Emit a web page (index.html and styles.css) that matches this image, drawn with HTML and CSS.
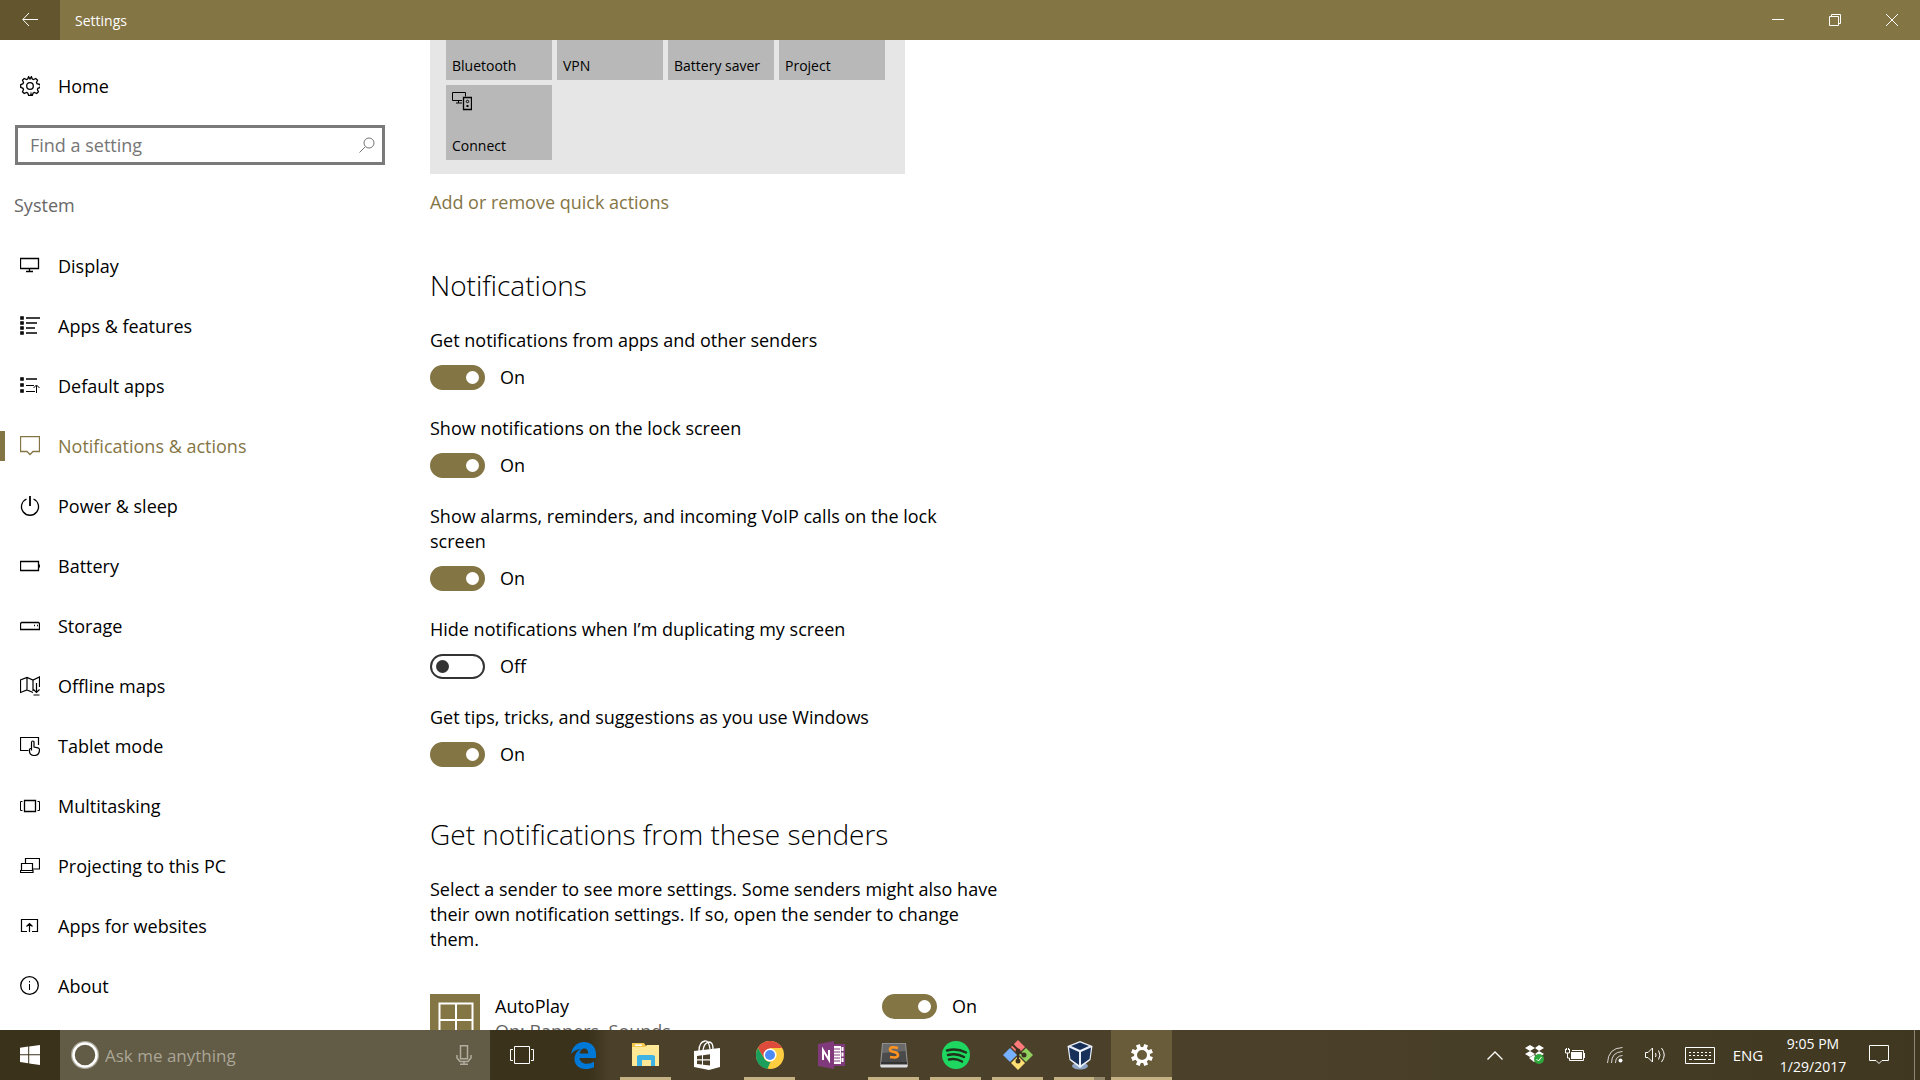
FILE: index.html
```html
<!DOCTYPE html>
<html lang="en">
<head>
<meta charset="utf-8">
<meta name="viewport" content="width=device-width, initial-scale=1">
<title>Settings</title>
<link rel="stylesheet" href="styles.css">
</head>
<body>
<header class="titlebar">
  <button class="back" aria-label="Back"><svg width="16" height="14" viewBox="0 0 16 14"><path d="M7 0 .8 6.500 7 13M1 6.500h15"/></svg></button>
  <h1 class="title">Settings</h1>
  <div class="window-buttons">
    <button aria-label="Minimize"><svg width="12" height="12" viewBox="0 0 12 12"><path d="M0 5.500h12"/></svg></button>
    <button aria-label="Restore"><svg width="12" height="12" viewBox="0 0 12 12"><path d="M.5 2.500h9v9h-9zM2.500 2.500v-2h9v9h-2"/></svg></button>
    <button aria-label="Close"><svg width="12" height="12" viewBox="0 0 12 12"><path d="M0 0l12 12M12 0 0 12"/></svg></button>
  </div>
</header>

<div class="window">
  <aside class="sidebar">
    <a class="nav-item home" href="#home"><svg class="icon" viewBox="0 0 20 20"><path stroke-width="1.300" d="M8.600.7 7.700 3 6.500 3.500 4.200 2.500 2.500 4.200l1 2.300L3 7.700.7 8.600v2.800L3 12.300l.5 1.200-1 2.300 1.700 1.700 2.300-1 1.200.5.9 2.300h2l.4-1.500.4 1.500h.9l.9-2.300 1.200-.5 2.300 1 1.700-1.700-1-2.300.5-1.200 2.300-.9V8.600L17 7.700l-.5-1.200 1-2.300-1.700-1.700-2.300 1L12.300 3 11.400.7 10 3z"/><circle cx="10" cy="10" r="3.300" stroke-width="1.300"/></svg>Home</a>
    <form class="search">
      <input type="text" aria-label="Find a setting" placeholder="Find a setting">
      <svg width="16" height="16" viewBox="0 0 16 16"><circle cx="10" cy="6" r="5"/><path d="M6.500 9.500.5 15.500"/></svg>
    </form>
    <h2 class="group">System</h2>
    <nav class="nav">
      <a class="nav-item" href="#display"><svg class="icon" viewBox="0 0 20 20"><path d="M.5 2.500h18v10H.5zM9.500 13v2.500M6 15.500h7" stroke-width="1.300"/></svg>Display</a>
      <a class="nav-item" href="#apps"><svg class="icon" viewBox="0 0 20 20"><path d="M1 1h2v2H1zM1 6h2v2H1zM1 11h2v2H1zM1 16h2v2H1z" stroke-width="1.600"/><path d="M6 2h14M6 7h11M6 12h9M6 17h11" stroke-width="1.500"/></svg>Apps &amp; features</a>
      <a class="nav-item" href="#default"><svg class="icon" viewBox="0 0 20 20"><path d="M1 2h2v2H1zM1 8h2v2H1zM1 14h2v2H1z" stroke-width="1.600"/><path d="M6 3h11" stroke-width="1.500"/><path d="M6 9.500h8M6 15.500h9M16.500 17V9.500M13.500 12l3-3 3 3"/></svg>Default apps</a>
      <a class="nav-item active" href="#notifications" aria-current="page"><svg class="icon" viewBox="0 0 20 20"><path d="M.5.500h19v15H13l-3 3-3-3H.5z" stroke-width="1.300"/></svg>Notifications &amp; actions</a>
      <a class="nav-item" href="#power"><svg class="icon" viewBox="0 0 20 20"><path d="M10 0v10" stroke-width="1.800"/><path d="M6.500 3a8.500 8.500 0 1 0 7 0" stroke-width="1.300"/></svg>Power &amp; sleep</a>
      <a class="nav-item" href="#battery"><svg class="icon" viewBox="0 0 20 20"><path d="M.5 5.500h18v9H.5zM19.500 8.500v3" stroke-width="1.300"/></svg>Battery</a>
      <a class="nav-item" href="#storage"><svg class="icon" viewBox="0 0 20 20"><path d="M1.500 6.500h17l1 1v6H.5v-6zM14 9.500h1M17 9.500h1" stroke-width="1.300"/></svg>Storage</a>
      <a class="nav-item" href="#maps"><svg class="icon" viewBox="0 0 20 20"><path d="M13 16.500l-6-2.500-6.500 2.500V4L7 1.500 13 4l6.500-3V11M7 1.500V14M13 4v11M16.500 7v9M13.500 13.500l3 3 3-3M13.500 19h6" stroke-width="1.200"/></svg>Offline maps</a>
      <a class="nav-item" href="#tablet"><svg class="icon" viewBox="0 0 20 20"><path d="M8.500 14.500h-8v-13h18V9M11.500 14.500V6.500q0-1.500 1.300-1.500T14 6.500V11l4 .8q1.500.4 1.500 2-.2 5.700-5 5.700T9.500 15.500v-2q0-1 1-1h1" stroke-width="1.200"/></svg>Tablet mode</a>
      <a class="nav-item" href="#multitasking"><svg class="icon" viewBox="0 0 20 20"><path d="M4.500 4.500h11v11h-11z" stroke-width="1.300"/><path d="M2.500 5.500h-2v9h2M17.500 5.500h2v9h-2"/></svg>Multitasking</a>
      <a class="nav-item" href="#projecting"><svg class="icon" viewBox="0 0 20 20"><path d="M5.500 7V2.500h14v10.500H13M1.500 14V7.500h11V14M.5 14.500h12.500v2H.5z" stroke-width="1.200"/></svg>Projecting to this PC</a>
      <a class="nav-item" href="#websites"><svg class="icon" viewBox="0 0 20 20"><path d="M7 15.500H1.500v-12h16v12H12M9.500 16V8M6.500 10.500l3-3 3 3" stroke-width="1.200"/></svg>Apps for websites</a>
      <a class="nav-item" href="#about"><svg class="icon" viewBox="0 0 20 20"><circle cx="9.500" cy="9.500" r="8.800" stroke-width="1.300"/><path d="M9.500 8v6M9.500 5v1.500"/></svg>About</a>
    </nav>
  </aside>

  <main class="content">
    <div class="quick-actions">
      <button class="tile">Bluetooth</button>
      <button class="tile">VPN</button>
      <button class="tile">Battery saver</button>
      <button class="tile">Project</button>
      <button class="tile"><svg class="icon" viewBox="0 0 20 20"><path d="M10 8.500H.5v-8h13v4M6.500 9v2M4 11h6"/><path d="M11.500 5.500h8v12h-8z" stroke-width="1.300"/><circle cx="15.500" cy="9.500" r="1.200"/><path d="M14.500 14h2" stroke-width="2"/></svg>Connect</button>
    </div>
    <a class="link" href="#quick">Add or remove quick actions</a>

    <section class="section">
      <h2 class="heading">Notifications</h2>
      <div class="setting"><label for="t1">Get notifications from apps and other senders</label><div class="switch"><input type="checkbox" role="switch" id="t1" checked><span>On</span></div></div>
      <div class="setting"><label for="t2">Show notifications on the lock screen</label><div class="switch"><input type="checkbox" role="switch" id="t2" checked><span>On</span></div></div>
      <div class="setting"><label for="t3">Show alarms, reminders, and incoming VoIP calls on the lock screen</label><div class="switch"><input type="checkbox" role="switch" id="t3" checked><span>On</span></div></div>
      <div class="setting"><label for="t4">Hide notifications when I’m duplicating my screen</label><div class="switch"><input type="checkbox" role="switch" id="t4"><span>Off</span></div></div>
      <div class="setting"><label for="t5">Get tips, tricks, and suggestions as you use Windows</label><div class="switch"><input type="checkbox" role="switch" id="t5" checked><span>On</span></div></div>
    </section>

    <section class="section">
      <h2 class="heading">Get notifications from these senders</h2>
      <p class="description">Select a sender to see more settings. Some senders might also have their own notification settings. If so, open the sender to change them.</p>
      <div class="sender">
        <svg class="sender-icon" viewBox="0 0 50 50"><path d="M9.500 9.500h33v33h-33zM26 9.500v33M9.500 26h33"/></svg>
        <div class="sender-text"><label for="t6">AutoPlay</label><span class="muted">On: Banners, Sounds</span></div>
        <div class="switch"><input type="checkbox" role="switch" id="t6" checked><span>On</span></div>
      </div>
    </section>
  </main>
</div>

<footer class="taskbar">
  <button class="start" aria-label="Start"><svg width="20" height="20" viewBox="0 0 20 20" fill="#fff"><path d="M0 2.800 8.200 1.600v7.600H0zM9.200 1.500 20 0v9.200H9.200zM0 10.200h8.200v8L0 17zM9.200 10.200H20V20L9.200 18.400z"/></svg></button>
  <form class="cortana">
    <svg width="28" height="28" viewBox="0 0 28 28" fill="none"><circle cx="14" cy="14" r="12.500" stroke="#aaa697" stroke-width="3"/><circle cx="14" cy="14" r="11.500" stroke="#fff" stroke-width="2.500"/></svg>
    <input type="text" aria-label="Ask me anything" placeholder="Ask me anything">
    <svg width="16" height="20" viewBox="0 0 16 20" fill="none" stroke="#b1ad9f" stroke-width="1.500"><path d="M4.500.8h7v13h-7zM1 10v3l3 3.500h8l3-3.500v-3M8 16.500v3M4 19.200h8"/></svg>
  </form>
  <div class="apps">
    <button class="app" aria-label="Task view"><svg width="24" height="18" viewBox="0 0 24 18" fill="none" stroke="#fff"><path d="M4.500.5h15v17h-15zM3 3.500H.5v11H3M21 3.500h2.500v11H21"/></svg></button>
    <button class="app" aria-label="Edge"><svg width="25" height="27" viewBox="0 0 25 27"><path fill="#0078d7" d="M0 12C1.500 4 7 0 13 0c7.500 0 12 5.500 12 12v4H8.500c.3 4 4 5.800 7.500 5.800 2.500 0 5-.7 7-2v5.400c-2.500 1.200-5 1.800-8.500 1.800C7.500 27 3.500 22.500 3.500 17 3.500 12.500 6 9 10 7 5.500 7.200 2.500 9 0 12zM8.700 11.500h8.500C17.200 8.500 16 6.500 13.300 6.500 10.700 6.500 9 9 8.700 11.500z"/></svg></button>
    <button class="app open" aria-label="File Explorer"><svg width="28" height="24" viewBox="0 0 28 24"><path fill="#f5c84b" d="M0 0h12l2 3h13v5H0z"/><path fill="#ffe896" d="M0 4h13l2-2h12v21H0z"/><path fill="#3fb4e4" d="M5 23V13l2-1h14l2 1v10h-4v-6h-9v6z"/><path fill="#fff" d="M3 1.500h7v1.500H3z"/></svg></button>
    <button class="app" aria-label="Store"><svg width="27" height="30" viewBox="0 0 27 30"><path fill="#fff" d="M0 11l26-3v19L15 30 0 27z"/><path d="M5 11Q5 2 11 1q4-.5 5 8M9 10q1-7 6-8 4 0 4 7" fill="none" stroke="#fff" stroke-width="1.300"/><path fill="#4b412a" d="M3 16l5-.7v4H3zM9 15.200l7-1v5H9zM3 20.500h5v4l-5-.6zM9 20.500h7v5l-7-.8z"/></svg></button>
    <button class="app open" aria-label="Chrome"><svg width="28" height="28" viewBox="0 0 28 28"><circle cx="14" cy="14" r="14" fill="#ffcd40"/><path fill="#de4a3c" d="M2 7C7-2.300 21-2.300 26 7H14L8 17z"/><path fill="#1a9f5c" d="M2 7l6.500 11q2 3 6 3l-3 6.700C2 26.500-3 16 2 7z"/><circle cx="14" cy="14" r="6.500" fill="#fff"/><circle cx="14" cy="14" r="5" fill="#4c8bf5"/></svg></button>
    <button class="app" aria-label="OneNote"><svg width="28" height="28" viewBox="0 0 28 28"><path fill="#80397b" d="M15 3h12v22H15z"/><path fill="#fff" d="M14 5h9v18h-9zM23.500 6h2v4h-2zM23.500 11.500h2v4h-2zM23.500 17h2v4h-2z"/><path d="M15 8h7M15 11h7M15 14h7M15 17h7M15 20h7" stroke="#80397b"/><path fill="#80397b" d="M0 3 16 0v28L0 25z"/><path d="M5 19V9l6 10V9" fill="none" stroke="#fff" stroke-width="2"/></svg></button>
    <button class="app open" aria-label="Sublime Text"><svg width="28" height="25" viewBox="0 0 28 25"><path fill="#8f8f8f" d="M2 0h24l2 22-1 3H1l-1-3z"/><path fill="#6a6a6a" d="M3 1h22l1.500 18h-25z"/><path fill="#4a4a4a" d="M2.500 10l23-2 1 11h-25z"/><path fill="#333" d="M1 19h26v2H1z"/><path fill="#ddd" d="M0 22h28l-1 2H1z"/><path d="M18 5q-8-2-8 1.500 0 2 4 2.500 4 .7 4 3 0 3.500-8 2" fill="none" stroke="#ff9320" stroke-width="2.600"/></svg></button>
    <button class="app open" aria-label="Spotify"><svg width="28" height="28" viewBox="0 0 28 28"><circle cx="14" cy="14" r="14" fill="#1ed760"/><path d="M5 9.500q10-2.500 19 2M6 14q9-2 16 2M7 18.500q7-1.500 13 2" fill="none" stroke="#20301a" stroke-width="2.500" stroke-linecap="round"/></svg></button>
    <button class="app open" aria-label="Git"><svg width="30" height="30" viewBox="0 0 30 30"><path fill="#ff7a78" d="M15 0l7 7-7 7-7-7z"/><path fill="#77b0ff" d="M7 8l7 7-7 7-7-7z"/><path fill="#8fd15c" d="M23 8l7 7-7 7-7-7z"/><path fill="#ffe074" d="M15 16l7 7-7 7-7-7z"/><path d="M9 4l6 6v13M15 11l6 4" fill="none" stroke="#3d3122" stroke-width="2"/><g fill="#3d3122"><circle cx="15" cy="11" r="2.500"/><circle cx="21" cy="15" r="2.500"/><circle cx="15" cy="21" r="2.500"/></g></svg></button>
    <button class="app open multi" aria-label="VirtualBox"><svg width="26" height="29" viewBox="0 0 26 29"><ellipse cx="13" cy="25" rx="8" ry="3.500" fill="#8ea3c4"/><path fill="#e9eff8" d="M13 0l12.500 5-2 14L13 27 2.500 19 .5 5z"/><path fill="#17305a" d="M13 1.500l9 3.500-9 4-9-4zM2 6.500l10 4.500v13l-8.500-6zM24 6.500 14 11v13l8.500-6z"/></svg></button>
    <button class="app open current" aria-label="Settings"><svg width="22" height="22" viewBox="0 0 22 22" fill="none" stroke="#fff"><circle cx="11" cy="11" r="6.500" stroke-width="3"/><path d="M11 0v4M11 18v4M0 11h4M18 11h4" stroke-width="4" transform="rotate(22.500 11 11)"/><path d="M11 0v4M11 18v4M0 11h4M18 11h4" stroke-width="4" transform="rotate(67.500 11 11)"/></svg></button>
  </div>
  <div class="tray">
    <button aria-label="Show hidden icons"><svg width="16" height="9" viewBox="0 0 16 9"><path d="M.5 8.500 8 1l7.500 7.500" stroke-width="1.300"/></svg></button>
    <button aria-label="Dropbox"><svg width="20" height="20" viewBox="0 0 20 20"><path fill="#fff" stroke="none" d="M5 0l5 3-5 3-5-3zM14 0l5 3-5 3-4-3zM5 6l5 3-5 3-5-3zM14 6l5 3-5 3-4-3zM4 13l5-3 5 3-5 4z"/><circle cx="14" cy="14" r="5" fill="#2fa83e" stroke="none"/><path d="M11.500 14l2 2 3-4"/></svg></button>
    <button aria-label="Battery"><svg width="20" height="14" viewBox="0 0 20 14"><path d="M7 2.500h11.500v10h-14V10M.5 1v4h4V1M1.500 0v2M3.500 0v2M2.500 5v5h2M19.500 5v5"/><path fill="#fff" stroke="none" d="M6 4h11v7H6z"/></svg></button>
    <button aria-label="Network"><svg width="16" height="16" viewBox="0 0 16 16"><path d="M.5 16Q1 1 15.500.5M4.500 16Q4.500 5 15.500 4.500M8.500 16q0-7 7-7.500" opacity=".8"/><circle cx="13.500" cy="13.500" r="2" fill="#fff" stroke="none"/></svg></button>
    <button aria-label="Volume"><svg width="21" height="16" viewBox="0 0 21 16"><path d="M.5 5.500H3L7.500 1v14L3 10.500H.5zM10.500 6q1 2 0 4M13.500 3.500q3 4.500 0 9M16.500 1q5.500 7 0 14"/></svg></button>
    <button class="keyboard" aria-label="Touch keyboard"><svg width="30" height="17" viewBox="0 0 30 17"><path d="M.5.500h29v16H.5z"/><path d="M4 5.500h22M4 8.500h22" stroke-dasharray="2 2"/><path d="M4 12.500h3M9 12.500h12M23 12.500h3"/></svg></button>
    <button class="language">ENG</button>
    <button class="clock"><span>9:05 PM</span><span>1/29/2017</span></button>
    <button class="action-center" aria-label="Action center"><svg width="20" height="20" viewBox="0 0 20 20"><path d="M.5.500h19v15H13l-3 3-3-3H.5z"/></svg></button>
    <button class="show-desktop" aria-label="Show desktop"></button>
  </div>
</footer>
</body>
</html>
```
FILE: styles.css
```css
:root {
  --accent: #847545;
}

* { box-sizing: border-box; }

body {
  margin: 0;
  height: 100vh;
  display: grid;
  grid-template-rows: 40px minmax(0, 1fr) 50px;
  overflow: hidden;
  background: #fff;
  color: #000;
  font: 18px/25px "Open Sans", "Noto Sans", sans-serif;
}

button, input { font: inherit; color: inherit; }
button { border: 0; padding: 0; background: none; }
a { color: inherit; text-decoration: none; }
h1, h2, p { margin: 0; font-weight: 400; }
svg { display: block; flex: none; }

/* Title bar */
.titlebar {
  display: flex;
  align-items: center;
  background: var(--accent);
  color: #fff;
}
.titlebar svg { fill: none; stroke: #fff; }
.back {
  display: grid;
  place-items: center;
  width: 60px;
  height: 100%;
  background: #63552d;
}
.title { margin-left: 15px; font-size: 14px; }
.window-buttons { display: flex; height: 100%; margin-left: auto; }
.window-buttons button { display: grid; place-items: center; width: 57px; }

/* Window */
.window {
  display: grid;
  grid-template-columns: 430px minmax(0, 1fr);
  overflow: hidden;
}
.icon { width: 20px; height: 20px; fill: none; stroke: currentColor; }

.sidebar { padding-top: 16px; }
.nav-item {
  display: flex;
  align-items: center;
  gap: 18px;
  height: 60px;
  padding-left: 20px;
}
.active { position: relative; color: var(--accent); }
.active::before {
  content: "";
  position: absolute;
  left: 0;
  width: 5px;
  height: 30px;
  background: var(--accent);
}
.search {
  display: flex;
  align-items: center;
  height: 40px;
  margin: 9px 45px 0 15px;
  padding: 0 7px 0 12px;
  border: 3px solid #7a7a7a;
}
.search svg { fill: none; stroke: #767676; }
.search input, .cortana input {
  flex: 1;
  min-width: 0;
  padding: 0;
  border: 0;
  outline: 0;
  background: none;
}
.search input::placeholder { color: #767676; opacity: 1; }
.group { margin: 28px 0 18px 14px; font-size: 18px; color: #666; }

/* Content, scrolled part-way down */
.content { max-width: 572px; }
.quick-actions {
  display: grid;
  grid-template-columns: repeat(4, 106px);
  grid-auto-rows: 75px;
  gap: 5px;
  width: 475px;
  margin-top: -51px;
  padding: 16px 16px 14px;
  background: #e6e6e6;
}
.tile {
  display: flex;
  flex-direction: column;
  align-items: flex-start;
  justify-content: flex-end;
  padding: 7px 6px 4px;
  background: #b8b8b8;
  font-size: 14px;
  line-height: 20px;
}
.tile svg { margin-bottom: auto; }
.link { display: inline-block; margin-top: 16px; color: var(--accent); }
.section { padding-top: 50px; }
.heading { margin-bottom: 23px; font-weight: 300; font-size: 28px; line-height: 40px; }
.setting { margin-bottom: 26px; }
.setting label { display: block; max-width: 550px; margin-bottom: 12px; }
.section + .section { padding-top: 21px; }

.switch { display: flex; gap: 15px; }
.switch input {
  appearance: none;
  display: flex;
  align-items: center;
  width: 55px;
  height: 25px;
  margin: 0;
  padding: 0 4px;
  border: 2px solid #333;
  border-radius: 13px;
}
.switch input::before {
  content: "";
  width: 13px;
  height: 13px;
  border-radius: 50%;
  background: #333;
}
.switch input:checked {
  justify-content: flex-end;
  border-color: var(--accent);
  background: var(--accent);
}
.switch input:checked::before { background: #fff; }

.sender { display: flex; gap: 15px; margin-top: 42px; }
.sender-icon { width: 50px; height: 50px; background: var(--accent); fill: none; stroke: #fff; stroke-width: 2; }
.sender-text { display: flex; flex-direction: column; width: 372px; }
.muted { color: #666; }

/* Taskbar */
.taskbar {
  display: flex;
  background: linear-gradient(90deg, #3b321c 0, #3b321c 590px, #4b412b 610px, #4b412b 1300px, #3f3720 100%);
  color: #fff;
}
.start { display: grid; place-items: center; width: 60px; }
.cortana {
  display: flex;
  align-items: center;
  gap: 6px;
  width: 430px;
  padding: 0 18px 0 11px;
  background: #625b45;
  font-size: 17px;
}
.cortana input::placeholder { color: #aaa697; opacity: 1; }
.apps { display: flex; gap: 1px; padding-left: 1px; }
.app { display: grid; place-items: center; width: 61px; }
.open {
  background: linear-gradient(#c5b282, #c5b282) center bottom / 51px 3px no-repeat;
}
.multi {
  background: linear-gradient(90deg, #c5b282 40px, #94866a 40px) center bottom / 51px 3px no-repeat;
}
.current { background-color: #685c3a; background-size: 100% 3px; }

.tray { display: flex; margin-left: auto; font-size: 15px; }
.tray button { display: grid; place-items: center; width: 40px; }
.tray svg { fill: none; stroke: #fff; }
.tray .keyboard { width: 50px; }
.tray .language { width: 46px; }
.tray .clock { width: 84px; padding: 2px 0; font-size: 14px; line-height: 23px; }
.tray .action-center { width: 48px; margin-right: 11px; }
.tray .show-desktop { width: 6px; border-left: 1px solid #8c8776; }
```
